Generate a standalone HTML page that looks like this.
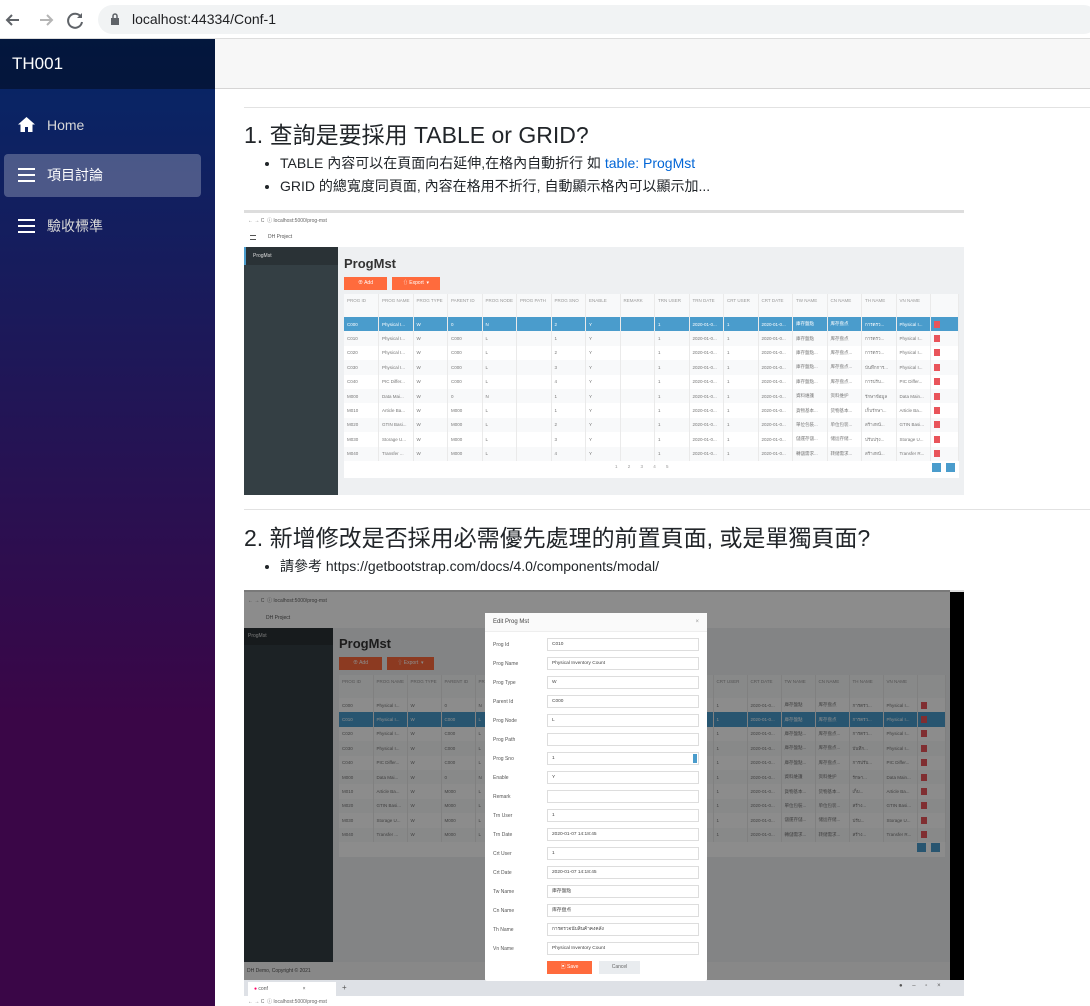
<!DOCTYPE html>
<html><head><meta charset="utf-8"><style>
*{box-sizing:border-box;margin:0;padding:0}
body{width:1090px;height:1006px;overflow:hidden;font-family:"Liberation Sans","Noto Sans CJK TC",sans-serif;background:#fff;position:relative}
.abs{position:absolute}
#chrome{left:0;top:0;width:1090px;height:39px;background:#fff;border-bottom:1px solid #ddd}
#url{left:98px;top:5px;width:1000px;height:29px;border-radius:15px;background:#f1f3f4;font-size:14px;color:#202124;line-height:29px;padding-left:34px}
#side{left:0;top:39px;width:215px;height:967px;background:linear-gradient(180deg,#052767 0%,#3a0647 70%)}
#brand{left:0;top:0;width:215px;height:50px;background:rgba(0,0,0,.4);color:#fff;font-size:17px;line-height:50px;padding-left:12px}
.nav{left:4px;width:197px;height:43px;color:#d7d7d7;font-size:14px;line-height:43px;padding-left:43px;border-radius:4px}
.nav.act{background:rgba(255,255,255,.25);color:#fff}
.ham{position:absolute;left:14px;top:14px;width:17px;height:14px;border-top:2px solid #fff;border-bottom:2px solid #fff}
.ham:after{content:"";position:absolute;left:0;top:4px;width:17px;height:2px;background:#fff}
#topr{left:215px;top:39px;width:875px;height:50px;background:#f7f7f7;border-bottom:1px solid #d6d5d5}
hr{position:absolute;border:0;border-top:1px solid #e2e2e2;height:0}
h2{position:absolute;font-weight:400;font-size:23px;color:#212529;white-space:nowrap}
ul{position:absolute;font-size:14px;color:#212529;line-height:23px;padding-left:36px;white-space:nowrap}
a{color:#0366d6;text-decoration:none}
.shot{overflow:hidden;background:#eef0f2}
.bb{background:#f7f7f7;font-size:5px;color:#666}
table{border-collapse:collapse;table-layout:fixed;font-family:"Liberation Sans","Noto Sans CJK TC",sans-serif;font-size:4.5px;color:#777}
td{height:14.4px;border-right:1px solid #eaeaea;padding-left:3px;white-space:nowrap;overflow:hidden}
tr.h td{height:23px;background:#e9ecef;color:#999;vertical-align:top;padding-top:4px}
tr:nth-child(odd) td{background:#f8f9fa}
tr:nth-child(even) td{background:#fff}
tr.s td{background:#4a9ccc!important;color:#fff}
.d{display:inline-block;width:6px;height:7px;background:#e9545a;vertical-align:middle}
.btn{position:absolute;height:13px;background:#ff6b3d;color:#fff;font-size:5px;line-height:13px;text-align:center}
.lbl{position:absolute;left:8px;font-size:5px;color:#555}
.inp{position:absolute;left:62px;width:152px;height:13px;border:1px solid #ddd;background:#fff;font-size:4.8px;line-height:11px;padding-left:4px;color:#444}
</style></head><body>
<div id="chrome" class="abs">
<svg class="abs" style="left:4px;top:11px" width="80" height="18" viewBox="0 0 80 18"><path d="M15 9H3M8 4L3 9l5 5" stroke="#5f6368" stroke-width="2" fill="none"/><path d="M36 9h12M43 4l5 5-5 5" stroke="#b5b5b5" stroke-width="2" fill="none"/><path d="M77 6a7 7 0 1 0 1 5" stroke="#5f6368" stroke-width="2" fill="none"/><path d="M78 2v5h-5z" fill="#5f6368"/></svg>
<div id="url" class="abs">localhost:44334/Conf-1</div>
<svg class="abs" style="left:110px;top:13px" width="10" height="13"><rect x="1" y="5" width="8" height="7" fill="#5f6368"/><path d="M3 5V3a2 2 0 0 1 4 0v2" stroke="#5f6368" stroke-width="1.5" fill="none"/></svg>
</div>
<div id="side" class="abs">
<div id="brand" class="abs">TH001</div>
<div class="nav abs" style="top:65px"><svg style="position:absolute;left:14px;top:13px" width="17" height="15"><path d="M8.5 0L0 7.5h2.5V15h4.5v-5h3v5h4.5V7.5H17z" fill="#fff"/></svg>Home</div>
<div class="nav act abs" style="top:115px"><span class="ham"></span>項目討論</div>
<div class="nav abs" style="top:166px"><span class="ham"></span>驗收標準</div>
</div>
<div id="topr" class="abs"></div>
<hr style="left:244px;top:107px;width:846px">
<h2 style="left:244px;top:116px">1. 查詢是要採用 TABLE or GRID?</h2>
<ul style="left:244px;top:152px"><li>TABLE 內容可以在頁面向右延伸,在格內自動折行 如 <a>table: ProgMst</a></li><li>GRID 的總寬度同頁面, 內容在格用不折行, 自動顯示格內可以顯示加...</li></ul>

<!-- shot 1 -->
<div class="abs shot" style="left:244px;top:210px;width:720px;height:285px">
<div class="abs bb" style="left:0;top:0;width:720px;height:18px;background:#fff;border-top:3px solid #ddd"><span style="position:absolute;left:4px;top:4px">← → C &nbsp;ⓘ localhost:5000/prog-mst</span></div>
<div class="abs" style="left:0;top:18px;width:720px;height:19px;background:#fff;font-size:5px;color:#555;line-height:19px;padding-left:24px">DH Project<span style="position:absolute;left:6px;top:7px;width:6px;height:5px;border-top:1px solid #555;border-bottom:1px solid #555"></span></div>
<div class="abs" style="left:0;top:37px;width:94px;height:248px;background:#343f44"><div style="height:18px;background:#2a3236;color:#ddd;font-size:5px;line-height:18px;padding-left:7px;border-left:2px solid #4a9ccc">ProgMst</div></div>
<div class="abs" style="left:100px;top:46px;font-size:13px;font-weight:bold;color:#333">ProgMst</div>
<div class="btn" style="left:100px;top:67px;width:43px">⊕ Add</div>
<div class="btn" style="left:148px;top:67px;width:48px">⇧ Export &nbsp;▾</div>
<div class="abs" style="left:100px;top:84px;width:615px;height:184px;background:#fff">
<table style="width:615px"><colgroup><col span="17" style="width:34.5px"><col style="width:28px"></colgroup>
<tr class="h"><td>PROG ID</td><td>PROG NAME</td><td>PROG TYPE</td><td>PARENT ID</td><td>PROG NODE</td><td>PROG PATH</td><td>PROG SNO</td><td>ENABLE</td><td>REMARK</td><td>TRN USER</td><td>TRN DATE</td><td>CRT USER</td><td>CRT DATE</td><td>TW NAME</td><td>CN NAME</td><td>TH NAME</td><td>VN NAME</td><td></td></tr>
<tr class="s"><td>C000</td><td>Physical I...</td><td>W</td><td>0</td><td>N</td><td></td><td>2</td><td>Y</td><td></td><td>1</td><td>2020-01-0...</td><td>1</td><td>2020-01-0...</td><td>庫存盤點</td><td>库存盘点</td><td>การตรว...</td><td>Physical I...</td><td><span class="d"></span></td></tr>
<tr><td>C010</td><td>Physical I...</td><td>W</td><td>C000</td><td>L</td><td></td><td>1</td><td>Y</td><td></td><td>1</td><td>2020-01-0...</td><td>1</td><td>2020-01-0...</td><td>庫存盤點</td><td>库存盘点</td><td>การตรว...</td><td>Physical I...</td><td><span class="d"></span></td></tr>
<tr><td>C020</td><td>Physical I...</td><td>W</td><td>C000</td><td>L</td><td></td><td>2</td><td>Y</td><td></td><td>1</td><td>2020-01-0...</td><td>1</td><td>2020-01-0...</td><td>庫存盤點...</td><td>库存盘点...</td><td>การตรว...</td><td>Physical I...</td><td><span class="d"></span></td></tr>
<tr><td>C030</td><td>Physical I...</td><td>W</td><td>C000</td><td>L</td><td></td><td>3</td><td>Y</td><td></td><td>1</td><td>2020-01-0...</td><td>1</td><td>2020-01-0...</td><td>庫存盤點...</td><td>库存盘点...</td><td>บันทึกการ...</td><td>Physical I...</td><td><span class="d"></span></td></tr>
<tr><td>C040</td><td>PIC Differ...</td><td>W</td><td>C000</td><td>L</td><td></td><td>4</td><td>Y</td><td></td><td>1</td><td>2020-01-0...</td><td>1</td><td>2020-01-0...</td><td>庫存盤點...</td><td>库存盘点...</td><td>การปรับ...</td><td>PIC Differ...</td><td><span class="d"></span></td></tr>
<tr><td>M000</td><td>Data Mai...</td><td>W</td><td>0</td><td>N</td><td></td><td>1</td><td>Y</td><td></td><td>1</td><td>2020-01-0...</td><td>1</td><td>2020-01-0...</td><td>資料維護</td><td>资料维护</td><td>รักษาข้อมูล</td><td>Data Main...</td><td><span class="d"></span></td></tr>
<tr><td>M010</td><td>Article Ba...</td><td>W</td><td>M000</td><td>L</td><td></td><td>1</td><td>Y</td><td></td><td>1</td><td>2020-01-0...</td><td>1</td><td>2020-01-0...</td><td>貨物基本...</td><td>货物基本...</td><td>เก็บรักษา...</td><td>Article Ba...</td><td><span class="d"></span></td></tr>
<tr><td>M020</td><td>GTIN Basi...</td><td>W</td><td>M000</td><td>L</td><td></td><td>2</td><td>Y</td><td></td><td>1</td><td>2020-01-0...</td><td>1</td><td>2020-01-0...</td><td>單位包裝...</td><td>单位包装...</td><td>สร้างหน้...</td><td>GTIN Basi...</td><td><span class="d"></span></td></tr>
<tr><td>M030</td><td>Storage U...</td><td>W</td><td>M000</td><td>L</td><td></td><td>3</td><td>Y</td><td></td><td>1</td><td>2020-01-0...</td><td>1</td><td>2020-01-0...</td><td>儲運存儲...</td><td>储运存储...</td><td>ปรับปรุง...</td><td>Storage U...</td><td><span class="d"></span></td></tr>
<tr><td>M040</td><td>Transfer ...</td><td>W</td><td>M000</td><td>L</td><td></td><td>4</td><td>Y</td><td></td><td>1</td><td>2020-01-0...</td><td>1</td><td>2020-01-0...</td><td>轉儲需求...</td><td>转储需求...</td><td>สร้างหน้...</td><td>Transfer R...</td><td><span class="d"></span></td></tr>
</table>
<div class="abs" style="left:271px;top:170px;font-size:4.5px;color:#999;word-spacing:9px">1 2 3 4 5</div>
<div class="abs" style="left:588px;top:169px;width:9px;height:9px;background:#4a9ccc"></div>
<div class="abs" style="left:602px;top:169px;width:9px;height:9px;background:#4a9ccc"></div>
</div>
</div>

<hr style="left:244px;top:509px;width:846px">
<h2 style="left:244px;top:519px">2. 新增修改是否採用必需優先處理的前置頁面, 或是單獨頁面?</h2>
<ul style="left:244px;top:555px"><li>請參考 https://getbootstrap.com/docs/4.0/components/modal/</li></ul>

<!-- shot 2 -->
<div class="abs shot" style="left:244px;top:590px;width:720px;height:416px;background:#eef0f2">
<div class="abs bb" style="left:0;top:0;width:720px;height:19px;background:#fff;border-top:2px solid #ddd"><span style="position:absolute;left:4px;top:5px">← → C &nbsp;ⓘ localhost:5000/prog-mst</span></div>
<div class="abs" style="left:0;top:19px;width:720px;height:19px;background:#fff;font-size:5px;color:#555;line-height:19px;padding-left:22px">DH Project</div>
<div class="abs" style="left:0;top:38px;width:89px;height:334px;background:#343f44"><div style="height:17px;background:#2a3236;color:#ddd;font-size:5px;line-height:17px;padding-left:4px">ProgMst</div></div>
<div class="abs" style="left:95px;top:46px;font-size:13px;font-weight:bold;color:#333">ProgMst</div>
<div class="btn" style="left:95px;top:67px;width:43px">⊕ Add</div>
<div class="btn" style="left:143px;top:67px;width:47px">⇧ Export &nbsp;▾</div>
<div class="abs" style="left:95px;top:85px;width:606px;height:182px;background:#fff">
<table style="width:606px"><colgroup><col span="17" style="width:34px"><col style="width:28px"></colgroup>
<tr class="h"><td>PROG ID</td><td>PROG NAME</td><td>PROG TYPE</td><td>PARENT ID</td><td>PROG NODE</td><td>PROG PATH</td><td>PROG SNO</td><td>ENABLE</td><td>REMARK</td><td>TRN USER</td><td>TRN DATE</td><td>CRT USER</td><td>CRT DATE</td><td>TW NAME</td><td>CN NAME</td><td>TH NAME</td><td>VN NAME</td><td></td></tr>
<tr><td>C000</td><td>Physical I...</td><td>W</td><td>0</td><td>N</td><td></td><td>2</td><td>Y</td><td></td><td>1</td><td>2020-01-0...</td><td>1</td><td>2020-01-0...</td><td>庫存盤點</td><td>库存盘点</td><td>การตรว...</td><td>Physical I...</td><td><span class="d"></span></td></tr>
<tr class="s"><td>C010</td><td>Physical I...</td><td>W</td><td>C000</td><td>L</td><td></td><td>1</td><td>Y</td><td></td><td>1</td><td>2020-01-0...</td><td>1</td><td>2020-01-0...</td><td>庫存盤點</td><td>库存盘点</td><td>การตรว...</td><td>Physical I...</td><td><span class="d"></span></td></tr>
<tr><td>C020</td><td>Physical I...</td><td>W</td><td>C000</td><td>L</td><td></td><td>2</td><td>Y</td><td></td><td>1</td><td>2020-01-0...</td><td>1</td><td>2020-01-0...</td><td>庫存盤點...</td><td>库存盘点...</td><td>การตรว...</td><td>Physical I...</td><td><span class="d"></span></td></tr>
<tr><td>C030</td><td>Physical I...</td><td>W</td><td>C000</td><td>L</td><td></td><td>3</td><td>Y</td><td></td><td>1</td><td>2020-01-0...</td><td>1</td><td>2020-01-0...</td><td>庫存盤點...</td><td>库存盘点...</td><td>บันทึก...</td><td>Physical I...</td><td><span class="d"></span></td></tr>
<tr><td>C040</td><td>PIC Differ...</td><td>W</td><td>C000</td><td>L</td><td></td><td>4</td><td>Y</td><td></td><td>1</td><td>2020-01-0...</td><td>1</td><td>2020-01-0...</td><td>庫存盤點...</td><td>库存盘点...</td><td>การปรับ...</td><td>PIC Differ...</td><td><span class="d"></span></td></tr>
<tr><td>M000</td><td>Data Mai...</td><td>W</td><td>0</td><td>N</td><td></td><td>1</td><td>Y</td><td></td><td>1</td><td>2020-01-0...</td><td>1</td><td>2020-01-0...</td><td>資料維護</td><td>资料维护</td><td>รักษา...</td><td>Data Main...</td><td><span class="d"></span></td></tr>
<tr><td>M010</td><td>Article Ba...</td><td>W</td><td>M000</td><td>L</td><td></td><td>1</td><td>Y</td><td></td><td>1</td><td>2020-01-0...</td><td>1</td><td>2020-01-0...</td><td>貨物基本...</td><td>货物基本...</td><td>เก็บ...</td><td>Article Ba...</td><td><span class="d"></span></td></tr>
<tr><td>M020</td><td>GTIN Basi...</td><td>W</td><td>M000</td><td>L</td><td></td><td>2</td><td>Y</td><td></td><td>1</td><td>2020-01-0...</td><td>1</td><td>2020-01-0...</td><td>單位包裝...</td><td>单位包装...</td><td>สร้าง...</td><td>GTIN Basi...</td><td><span class="d"></span></td></tr>
<tr><td>M030</td><td>Storage U...</td><td>W</td><td>M000</td><td>L</td><td></td><td>3</td><td>Y</td><td></td><td>1</td><td>2020-01-0...</td><td>1</td><td>2020-01-0...</td><td>儲運存儲...</td><td>储运存储...</td><td>ปรับ...</td><td>Storage U...</td><td><span class="d"></span></td></tr>
<tr><td>M040</td><td>Transfer ...</td><td>W</td><td>M000</td><td>L</td><td></td><td>4</td><td>Y</td><td></td><td>1</td><td>2020-01-0...</td><td>1</td><td>2020-01-0...</td><td>轉儲需求...</td><td>转储需求...</td><td>สร้าง...</td><td>Transfer R...</td><td><span class="d"></span></td></tr>
</table>
<div class="abs" style="left:578px;top:168px;width:9px;height:9px;background:#4a9ccc"></div>
<div class="abs" style="left:592px;top:168px;width:9px;height:9px;background:#4a9ccc"></div>
</div>
<div class="abs" style="left:0;top:372px;width:720px;height:18px;background:#f7f7f7;font-size:5px;color:#555;line-height:18px;padding-left:3px">DH Demo, Copyright © 2021</div>
<!-- overlay -->
<div class="abs" style="left:0;top:0;width:706px;height:390px;background:rgba(0,0,0,.45)"></div>
<div class="abs" style="left:706px;top:2px;width:14px;height:390px;background:#000"></div>
<div class="abs" style="left:0;top:390px;width:720px;height:16px;background:#dee1e6;font-size:5px;color:#555"><div style="position:absolute;left:4px;top:2px;width:88px;height:14px;background:#fff;padding:4px 0 0 6px"><span style="color:#f06">●</span> conf &nbsp;&nbsp;&nbsp;&nbsp;&nbsp;&nbsp;&nbsp;&nbsp;&nbsp;&nbsp;&nbsp;&nbsp;&nbsp;&nbsp;&nbsp;&nbsp;&nbsp;&nbsp;&nbsp;&nbsp;&nbsp;&nbsp;&nbsp;&nbsp;×</div><span style="position:absolute;left:98px;top:3px;font-size:8px">+</span><span style="position:absolute;left:655px;top:3px;font-size:6px;word-spacing:8px">● – ▫ ×</span></div>
<div class="abs bb" style="left:0;top:406px;width:720px;height:10px;background:#fff"><span style="position:absolute;left:4px;top:2px">← → C &nbsp;ⓘ localhost:5000/prog-mst</span></div>
<!-- modal -->
<div class="abs" style="left:241px;top:23px;width:222px;height:368px;background:#fff;border-radius:2px">
<div style="height:19px;border-bottom:1px solid #eee;font-size:6px;color:#444;line-height:19px;padding-left:8px;background:#fafafa">Edit Prog Mst<span style="position:absolute;right:8px;color:#999">×</span></div>
<div class="lbl" style="top:29px">Prog Id</div><div class="inp" style="top:25px">C010</div>
<div class="lbl" style="top:48px">Prog Name</div><div class="inp" style="top:44px">Physical Inventory Count</div>
<div class="lbl" style="top:67px">Prog Type</div><div class="inp" style="top:63px">W</div>
<div class="lbl" style="top:86px">Parent Id</div><div class="inp" style="top:82px">C000</div>
<div class="lbl" style="top:105px">Prog Node</div><div class="inp" style="top:101px">L</div>
<div class="lbl" style="top:124px">Prog Path</div><div class="inp" style="top:120px"></div>
<div class="lbl" style="top:143px">Prog Sno</div><div class="inp" style="top:139px">1<span style="position:absolute;right:1px;top:1px;width:4px;height:9px;background:#4a9ccc"></span></div>
<div class="lbl" style="top:162px">Enable</div><div class="inp" style="top:158px">Y</div>
<div class="lbl" style="top:181px">Remark</div><div class="inp" style="top:177px"></div>
<div class="lbl" style="top:200px">Trn User</div><div class="inp" style="top:196px">1</div>
<div class="lbl" style="top:219px">Trn Date</div><div class="inp" style="top:215px">2020-01-07 14:18:45</div>
<div class="lbl" style="top:238px">Crt User</div><div class="inp" style="top:234px">1</div>
<div class="lbl" style="top:257px">Crt Date</div><div class="inp" style="top:253px">2020-01-07 14:18:45</div>
<div class="lbl" style="top:276px">Tw Name</div><div class="inp" style="top:272px">庫存盤點</div>
<div class="lbl" style="top:295px">Cn Name</div><div class="inp" style="top:291px">库存盘点</div>
<div class="lbl" style="top:314px">Th Name</div><div class="inp" style="top:310px">การตรวจนับสินค้าคงคลัง</div>
<div class="lbl" style="top:333px">Vn Name</div><div class="inp" style="top:329px">Physical Inventory Count</div>
<div class="btn" style="left:62px;top:348px;width:45px">▣ Save</div>
<div class="btn" style="left:114px;top:348px;width:41px;background:#e9ecef;color:#666">Cancel</div>
</div>
</div>
</body></html>
